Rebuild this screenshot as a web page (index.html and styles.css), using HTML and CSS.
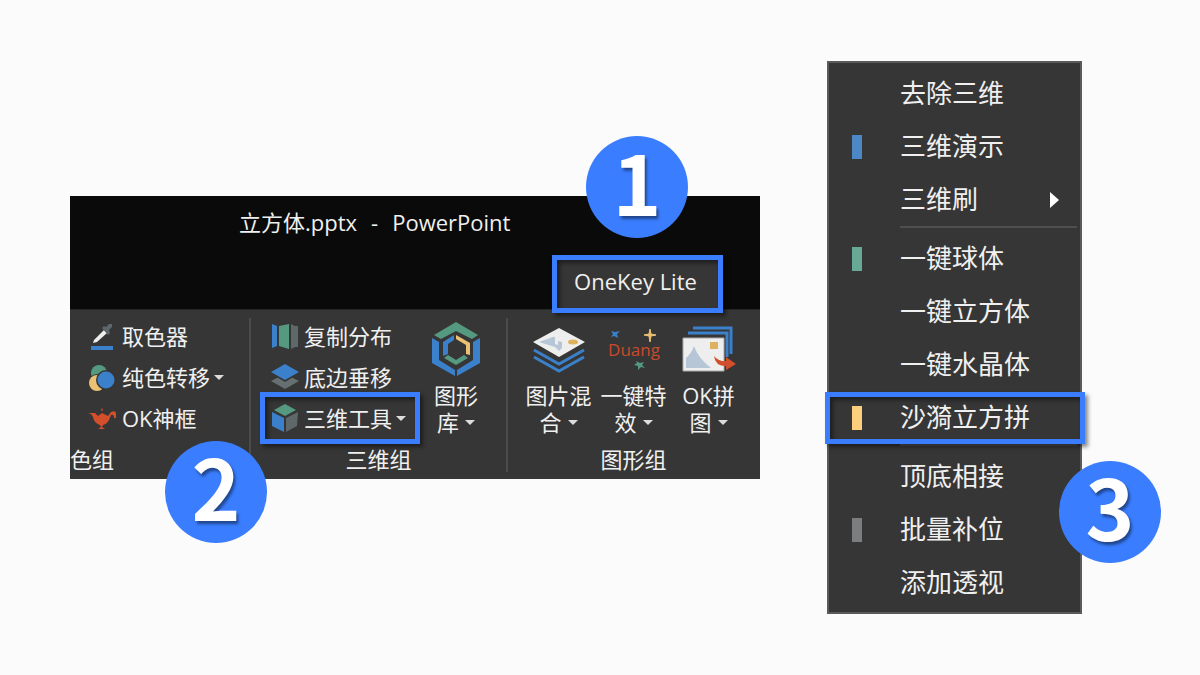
FILE: index.html
```html
<!DOCTYPE html>
<html lang="zh-CN">
<head>
<meta charset="utf-8">
<meta name="viewport" content="width=device-width, initial-scale=1">
<title>立方体.pptx - PowerPoint</title>
<link rel="stylesheet" href="styles.css">
</head>
<body>
<main class="stage">
  <section class="window">
    <header class="titlebar">
      <h1 class="doc-title"><span>立方体.pptx</span><span>-</span><span>PowerPoint</span></h1>
      <div class="tabs">
        <button class="tab marked" type="button">OneKey Lite<span class="badge badge-one">1</span></button>
      </div>
    </header>
    <div class="ribbon">
      <section class="group group-color">
        <div class="group-body">
          <div class="stack">
            <button class="tool" type="button">
              <svg class="icon" viewBox="0 0 30 30"><path d="M5 21l1-3 10-10 3 3-10 9z" fill="#eee"/><path d="M14 6l2-2 2 1 3-3h3v3l-3 3 1 3-2 2z" fill="#5d6668"/><path d="M3 24h22v4H3z" fill="#3b80cb"/></svg>
              <span>取色器</span>
            </button>
            <button class="tool" type="button">
              <svg class="icon" viewBox="0 0 30 30"><circle cx="11" cy="10" r="8" fill="#559a80"/><circle cx="9" cy="20" r="9" fill="#363636"/><circle cx="9" cy="20" r="8" fill="#ebc274"/><circle cx="18" cy="17" r="10" fill="#363636"/><circle cx="18" cy="17" r="8.500" fill="#3b80cb"/></svg>
              <span>纯色转移</span><i class="caret"></i>
            </button>
            <button class="tool" type="button">
              <svg class="icon" viewBox="0 0 30 30"><path d="M0 9h7l3 3 4-3V7l-1-1 1-2 1 2-1 1v2l6 3 3-4q5-2 5 2v4h-2q0-4-3-3l-2 5q-2 4-6 5l-1 2 3 2H10l3-2-1-2q-6-2-7-8l-2-3-3-1z" fill="#d34e2b"/></svg>
              <span>OK神框</span>
            </button>
          </div>
        </div>
        <h2 class="group-name">色组</h2>
      </section>
      <section class="group group-solid">
        <div class="group-body">
          <div class="stack">
            <button class="tool" type="button">
              <svg class="icon" viewBox="0 0 30 30"><path d="M2 2l5 2v20l-5 2z" fill="#3b80cb"/><path d="M9 4l10-2v25L9 24z" fill="#559a80"/><path d="M21 2l4 2h3v21h-3l-4 2z" fill="#5e686a"/></svg>
              <span>复制分布</span>
            </button>
            <button class="tool" type="button">
              <svg class="icon" viewBox="0 0 30 30"><path d="M1 18l14-7 14 7-14 8z" fill="#667073"/><path d="M0 10l15-10 15 10-15 9z" fill="#363636"/><path d="M1 9l14-8 14 8-14 8z" fill="#3b80cb"/></svg>
              <span>底边垂移</span>
            </button>
            <button class="tool marked marked-tool" type="button">
              <svg class="icon" viewBox="0 0 30 30"><path d="M4 6l11-6 11 6-11 6z" fill="#559a80"/><path d="M2 8l12 6v14L2 22z" fill="#3b80cb"/><path d="M28 8l-12 6v14l11-6z" fill="#5e686a"/></svg>
              <span>三维工具</span><i class="caret"></i>
              <span class="badge badge-two">2</span>
            </button>
          </div>
          <button class="big" type="button">
            <svg class="big-icon" viewBox="0 0 56 56"><path d="M28 1l22 13-6 4-16-8-15 8-7-4z" fill="#559a80"/><path d="M4 17l7 4v18l16 10v6L4 42z" fill="#3b80cb"/><path d="M52 17l-7 4v18L29 49v6l23-13z" fill="#3b80cb"/><path d="M26 14v5l-6 4v10l-5 2V21z" fill="#3b80cb"/><path d="M28 14l14 8v12l-4-1v-9l-10-6z" fill="#ebc274"/><path d="M16 37l4-3 8 5 8-5 4 3-12 7z" fill="#559a80"/></svg>
            <span>图形<br>库<i class="caret"></i></span>
          </button>
        </div>
        <h2 class="group-name">三维组</h2>
      </section>
      <section class="group group-shape">
        <div class="group-body">
          <button class="big" type="button">
            <svg class="big-icon" viewBox="0 0 56 56"><path d="M2 21l26-14 26 14-26 15z" fill="#eee"/><path d="M8 21l14-5h2v7l3 1v-4l4 1v6l-3 3-4-4z" fill="#b6c6d7"/><ellipse cx="42" cy="21" rx="5" ry="2.500" fill="#ddb15d"/><path d="M3 29l25 14 25-14M3 36l25 14 25-14" fill="none" stroke="#3b80cb" stroke-width="3"/></svg>
            <span>图片混<br>合<i class="caret"></i></span>
          </button>
          <button class="big" type="button">
            <svg class="big-icon" viewBox="0 0 56 56"><text class="duang" x="28" y="35" text-anchor="middle">Duang</text><path d="M44 8l1 5 5 1-5 1-1 6-1-6-5-1 5-1z" fill="#ebc274" stroke="#ebc274"/><path d="M5 10l4 1 5-1-3 3 1 4-4-2-3 1 2-3z" fill="#3b80cb"/><path d="M30 40l4 2 4-1-2 3 3 3-4-1-3 3v-4l-4-1 3-2z" fill="#559a80"/></svg>
            <span>一键特<br>效<i class="caret"></i></span>
          </button>
          <button class="big" type="button">
            <svg class="big-icon" viewBox="0 0 56 56"><path d="M7 12h39v24M12 7h38v26" fill="none" stroke="#3b80cb" stroke-width="3"/><path d="M2 17h41v33H2z" fill="#eee" stroke="#aaa" stroke-width="1"/><path d="M5 47V37q5-4 8-12 4 12 17 22z" fill="#b6c6d7"/><path d="M29 21h8v7h-8z" fill="#ddb15d"/><path d="M33 35q5 6 12 5v-4l10 7-10 6v-4q-11 0-12-10z" fill="#d34e2b"/></svg>
            <span>OK拼<br>图<i class="caret"></i></span>
          </button>
        </div>
        <h2 class="group-name">图形组</h2>
      </section>
    </div>
  </section>

  <nav class="menu">
    <button class="item" type="button"><span>去除三维</span></button>
    <button class="item" type="button"><i class="swatch blue"></i><span>三维演示</span></button>
    <button class="item" type="button"><span>三维刷</span><i class="submenu"></i></button>
    <hr class="divider">
    <button class="item" type="button"><i class="swatch green"></i><span>一键球体</span></button>
    <button class="item" type="button"><span>一键立方体</span></button>
    <button class="item" type="button"><span>一键水晶体</span></button>
    <button class="item marked marked-item" type="button"><i class="swatch yellow"></i><span>沙漪立方拼</span><span class="badge badge-three">3</span></button>
    <hr class="divider">
    <button class="item" type="button"><span>顶底相接</span></button>
    <button class="item" type="button"><i class="swatch gray"></i><span>批量补位</span></button>
    <button class="item" type="button"><span>添加透视</span></button>
  </nav>
</main>
</body>
</html>
```

FILE: styles.css
```css
* {
  box-sizing: border-box;
}

body {
  margin: 0;
  background: #fbfbfb;
  color: #f0f0f0;
  font-family: "Open Sans", "Noto Sans CJK SC", sans-serif;
  font-size: 22px;
  line-height: 27px;
}

button {
  margin: 0;
  padding: 0;
  border: 0;
  background: none;
  color: inherit;
  font: inherit;
  white-space: nowrap;
}

.stage {
  display: grid;
  grid-template-columns: 690fr 255fr;
  align-items: center;
  gap: 67px;
  min-height: 100vh;
  padding: 0 118px 0 70px;
}

.window {
  background: #363636;
}

.titlebar {
  display: flex;
  flex-direction: column;
  background: #0a0a0a;
  border-bottom: 1px solid #262626;
}

.doc-title {
  display: flex;
  gap: 14px;
  margin: 0;
  padding: 13px 0 0 169px;
  font-size: 22px;
  font-weight: 400;
}

.tabs {
  display: flex;
  justify-content: flex-end;
  padding: 24px 42px 0 0;
}

.tab {
  width: 161px;
  height: 49px;
  padding: 0 4px 6px 0;
  background: #363636;
}

/* Blue call-out frame around a control */
.marked {
  position: relative;
}

.marked::after {
  content: "";
  position: absolute;
  inset: -5px -5px -4px;
  border: 5px solid #3a7eff;
  box-shadow: 3px 3px 4px rgba(0, 0, 0, .45), inset 3px 3px 4px rgba(0, 0, 0, .45);
  pointer-events: none;
}

.marked-tool::after {
  inset: -6px -14px -5px -10px;
}

.marked-item::after {
  inset: 1px -5px 0 -4px;
}

.badge {
  position: absolute;
  z-index: 2;
  width: 102px;
  height: 102px;
  border-radius: 50%;
  background: #3a7eff;
  color: #fff;
  font: 700 83px/88px "Noto Sans CJK SC", sans-serif;
  text-align: center;
  text-shadow: 2px 3px 3px rgba(0, 0, 0, .45);
}

.badge-one {
  top: -124px;
  left: 29px;
}

.badge-two {
  top: 43px;
  left: -105px;
}

.badge-three {
  top: 70px;
  right: -81px;
}

.ribbon {
  display: grid;
  grid-template-columns: 180fr 257fr 253fr;
  padding-top: 6px;
}

.group {
  position: relative;
}

.group + .group::before {
  content: "";
  position: absolute;
  inset: 2px auto 7px -1px;
  width: 2px;
  background: #4b4b4b;
}

.group-body {
  display: flex;
  min-height: 123px;
}

.group-color .group-body {
  padding-left: 18px;
}

.group-solid .group-body {
  padding-left: 20px;
  gap: 20px;
}

.group-shape .group-body {
  justify-content: center;
}

.group-name {
  margin: 0;
  font-size: 22px;
  font-weight: 400;
  line-height: 40px;
  text-align: center;
}

.group-color .group-name {
  text-align: left;
}

.stack {
  display: flex;
  flex-direction: column;
  align-items: flex-start;
}

.tool {
  display: flex;
  align-items: center;
  gap: 4px;
  height: 41px;
}

.icon {
  width: 30px;
  height: 30px;
}

.caret {
  display: inline-block;
  border: 5px solid transparent;
  border-top-color: #ddd;
  border-bottom: 0;
}

.big {
  display: flex;
  flex-direction: column;
  align-items: center;
  width: 75px;
  padding-top: 5px;
}

.group-solid .big {
  width: 60px;
}

.big-icon {
  width: 56px;
  height: 56px;
  margin-bottom: 5px;
}

.big .caret {
  margin-left: 6px;
  vertical-align: 6px;
}

.duang {
  fill: #c94b2c;
  font-size: 17px;
}

.menu {
  display: flex;
  flex-direction: column;
  padding: 4px 0 3px;
  border: 2px solid #5a5a5a;
  background: #363636;
  font-size: 26px;
}

.item {
  display: flex;
  align-items: center;
  height: 53px;
  padding: 0 21px 0 71px;
  text-align: left;
}

.swatch {
  width: 10px;
  height: 24px;
  margin: 0 38px 0 -48px;
}

.blue { background: #4d88c6; }
.green { background: #67a994; }
.yellow { background: #fbcf7c; }
.gray { background: #7c7d7f; }

.submenu {
  margin-left: auto;
  border: 8px solid transparent;
  border-left: 9px solid #fff;
  border-right: 0;
}

.divider {
  width: auto;
  height: 2px;
  margin: 0 3px 4px 71px;
  border: 0;
  background: #4f4f4f;
}
```
